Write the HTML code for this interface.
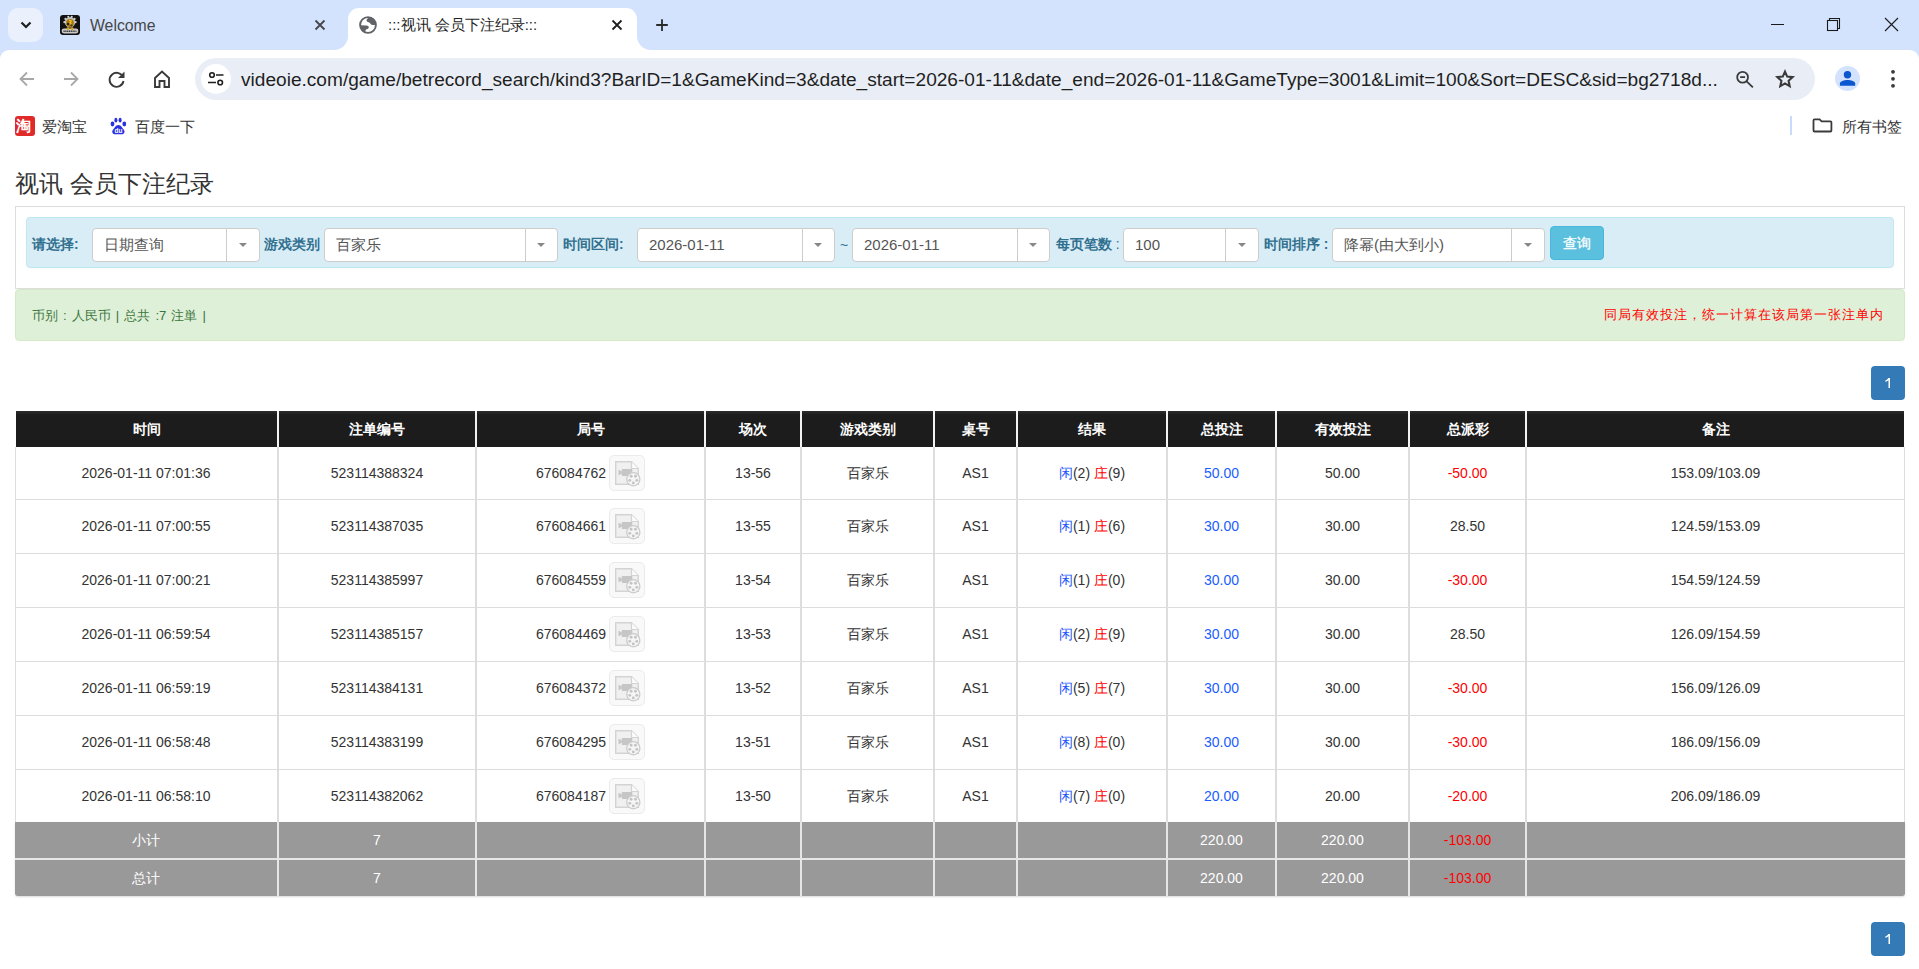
<!DOCTYPE html><html><head><meta charset="utf-8"><style>
*{box-sizing:border-box;margin:0;padding:0}
html,body{width:1919px;height:969px;overflow:hidden;background:#fff;font-family:"Liberation Sans", sans-serif;}
.a{position:absolute}
.tx{position:absolute;white-space:nowrap;line-height:1}
.th{position:absolute;top:411px;height:36px;background:linear-gradient(#2c2c2c,#1c1c1c 4px);color:#fff;font-weight:bold;font-size:13.75px;text-align:center;line-height:37px}
.td{position:absolute;text-align:center;color:#333;font-size:14px;white-space:nowrap}
.vb{position:absolute;width:2px}
.hb{position:absolute;height:1px;background:#dddddd}
.sel{position:absolute;top:228px;height:34px;background:#fff;border:1px solid #cccccc;border-radius:4px}
.sel .v{position:absolute;top:0;line-height:32px;font-size:15px;color:#555;white-space:nowrap}
.sel .d{position:absolute;top:0;bottom:0;width:1px;background:#cccccc}
.sel .c{position:absolute;top:14px;width:0;height:0;border-left:4px solid transparent;border-right:4px solid transparent;border-top:4px solid #888}
.lbl{position:absolute;top:237px;font-size:13.75px;font-weight:bold;color:#31708f;line-height:16px;white-space:nowrap}
</style></head><body>

<div class="a" style="left:0;top:0;width:1919px;height:62px;background:#d3e3fd"></div>
<div class="a" style="left:8px;top:8px;width:35px;height:34px;border-radius:10px;background:#eaf1fd"></div>
<svg class="a" style="left:17.5px;top:17px" width="16" height="16" viewBox="0 0 16 16"><path d="M3.5 5.5L8 10l4.5-4.5" fill="none" stroke="#1f1f1f" stroke-width="2.2"/></svg>
<div class="a" style="left:60px;top:15px;width:20px;height:20px;border-radius:3px;background:#111"></div>
<svg class="a" style="left:60px;top:15px" width="20" height="20" viewBox="0 0 20 20"><circle cx="10" cy="7.2" r="5.2" fill="#bdbdbd"/><circle cx="4.40" cy="7.20" r="1.1" fill="#d0d0d0"/><circle cx="5.47" cy="3.91" r="1.1" fill="#d0d0d0"/><circle cx="8.27" cy="1.87" r="1.1" fill="#d0d0d0"/><circle cx="11.73" cy="1.87" r="1.1" fill="#d0d0d0"/><circle cx="14.53" cy="3.91" r="1.1" fill="#d0d0d0"/><circle cx="15.60" cy="7.20" r="1.1" fill="#d0d0d0"/><circle cx="10" cy="8" r="3.9" fill="#a87a08"/><circle cx="8" cy="9" r="1.2" fill="#222"/><circle cx="11.5" cy="10.6" r="1" fill="#333"/><path d="M9.2 5.2l2 .9-1.1 1.6 1.3 1.2" fill="none" stroke="#f5c232" stroke-width="1.3"/><rect x="1.6" y="13.6" width="16.8" height="4.8" rx="2.4" fill="#c9c9c9"/><path d="M3.5 16.3h13" stroke="#333" stroke-width="1.5" stroke-dasharray="1.2 .6"/><circle cx="7.9" cy="13.6" r="1.4" fill="#d9a010"/><circle cx="12.1" cy="13.6" r="1.4" fill="#d9a010"/></svg>
<div class="tx" style="left:90px;top:18px;font-size:15.8px;color:#474747">Welcome</div>
<svg class="a" style="left:313px;top:18px" width="14" height="14" viewBox="0 0 14 14"><path d="M2.5 2.5l9 9M11.5 2.5l-9 9" stroke="#474747" stroke-width="1.8"/></svg>
<svg class="a" style="left:334px;top:8px" width="317" height="42" viewBox="0 0 317 42"><path d="M0 42A14 14 0 0 0 14 28V11A11 11 0 0 1 25 0H292A11 11 0 0 1 303 11V28A14 14 0 0 0 317 42Z" fill="#fff"/></svg>
<svg class="a" style="left:358px;top:15px" width="20" height="20" viewBox="0 0 20 20"><circle cx="10" cy="10" r="7.9" fill="none" stroke="#5f6368" stroke-width="1.9"/><path d="M11.8 2C10.8 3 9 3.6 8.6 5.1 8.3 6.4 9.3 7.2 10.7 7.3 11.7 7.4 12.1 8.3 12.8 9.3 13.5 10.3 15.2 10.2 17.9 9.7A8 8 0 0 0 11.8 2Z" fill="#5f6368"/><path d="M2 10.3L8.3 10.5C9.9 10.6 10.9 11.3 10.8 12.6 10.7 13.9 9.2 14.1 8.1 14.6 7.3 15 7.3 16.2 7.6 17.8A8 8 0 0 1 2 10.3Z" fill="#5f6368"/></svg>
<div class="tx" style="left:388px;top:17px;font-size:15px;color:#1f1f1f">:::视讯 会员下注纪录:::</div>
<svg class="a" style="left:610px;top:18px" width="14" height="14" viewBox="0 0 14 14"><path d="M2.5 2.5l9 9M11.5 2.5l-9 9" stroke="#1f1f1f" stroke-width="1.8"/></svg>
<svg class="a" style="left:654px;top:17px" width="16" height="16" viewBox="0 0 16 16"><path d="M8 2.3v11.6M2.2 8h11.6" stroke="#2a2a2a" stroke-width="1.8"/></svg>
<div class="a" style="left:1771px;top:24px;width:13px;height:1px;background:#1a1a1a"></div>
<svg class="a" style="left:1826px;top:17px" width="16" height="16" viewBox="0 0 16 16"><rect x="1.5" y="3.5" width="10" height="10" fill="none" stroke="#1a1a1a" stroke-width="1.1"/><path d="M3.5 3V1.5H13.5V11.5H12" fill="none" stroke="#1a1a1a" stroke-width="1.1"/></svg>
<svg class="a" style="left:1884px;top:17px" width="16" height="16" viewBox="0 0 16 16"><path d="M1 1l13 13M14 1L1 14" stroke="#1a1a1a" stroke-width="1.1"/></svg>
<div class="a" style="left:0;top:50px;width:1919px;height:96px;background:#fff;border-radius:9px 9px 0 0"></div>
<svg class="a" style="left:17px;top:69px" width="20" height="20" viewBox="0 0 20 20"><path d="M17 10H4M10 3.5L3.5 10 10 16.5" fill="none" stroke="#a8a8a8" stroke-width="1.8"/></svg>
<svg class="a" style="left:61px;top:69px" width="20" height="20" viewBox="0 0 20 20"><path d="M3 10h13M10 3.5l6.5 6.5L10 16.5" fill="none" stroke="#a8a8a8" stroke-width="1.8"/></svg>
<svg class="a" style="left:107px;top:69px" width="20" height="20" viewBox="0 0 20 20"><path d="M16.2 8.5A7 7 0 1 0 16.5 12" fill="none" stroke="#3a3a3a" stroke-width="1.9"/><path d="M17.5 2.5v6.5h-6.5z" fill="#3a3a3a"/></svg>
<svg class="a" style="left:152px;top:69px" width="20" height="20" viewBox="0 0 20 20"><path d="M3 18V9l7-6.5L17 9v9h-4.5v-6h-5v6z" fill="none" stroke="#3a3a3a" stroke-width="1.9" stroke-linejoin="miter"/></svg>
<div class="a" style="left:195px;top:58px;width:1620px;height:42px;border-radius:21px;background:#e9eef6"></div>
<div class="a" style="left:201px;top:64px;width:30px;height:30px;border-radius:15px;background:#fff"></div>
<svg class="a" style="left:206px;top:69px" width="20" height="20" viewBox="0 0 20 20"><circle cx="6" cy="6" r="2.3" fill="none" stroke="#1f1f1f" stroke-width="1.6"/><path d="M10 6h7.5M2 13.5h8" stroke="#1f1f1f" stroke-width="1.6"/><circle cx="14.2" cy="13.5" r="2.3" fill="none" stroke="#1f1f1f" stroke-width="1.6"/></svg>
<div class="tx" id="url" style="left:241px;top:70px;font-size:19.1px;color:#1f1f1f">videoie.com/game/betrecord_search/kind3?BarID=1&amp;GameKind=3&amp;date_start=2026-01-11&amp;date_end=2026-01-11&amp;GameType=3001&amp;Limit=100&amp;Sort=DESC&amp;sid=bg2718d...</div>
<svg class="a" style="left:1733px;top:67px" width="24" height="24" viewBox="0 0 24 24"><circle cx="9.6" cy="10.3" r="5.4" fill="none" stroke="#3a3a3a" stroke-width="1.8"/><path d="M7.1 10.2h5M13.6 14.3l6.3 6" stroke="#3a3a3a" stroke-width="1.8"/></svg>
<svg class="a" style="left:1773px;top:67px" width="24" height="24" viewBox="0 0 24 24"><path d="M12.00 4.60L14.21 9.56L19.61 10.13L15.58 13.76L16.70 19.07L12.00 16.36L7.30 19.07L8.42 13.76L4.39 10.13L9.79 9.56Z" fill="none" stroke="#3a3a3a" stroke-width="2.1" stroke-linejoin="miter"/></svg>
<div class="a" style="left:1835px;top:66px;width:25px;height:25px;border-radius:13px;background:#d3e3fd"></div>
<svg class="a" style="left:1835px;top:66px" width="25" height="25" viewBox="0 0 25 25"><circle cx="12.5" cy="8.8" r="3.7" fill="#0b57d0"/><path d="M4.9 19.7V17.6C4.9 15 9 13.9 12.5 13.9S20.2 15 20.2 17.6V19.7Z" fill="#0b57d0"/></svg>
<svg class="a" style="left:1886.5px;top:68px" width="12" height="22" viewBox="0 0 12 22"><circle cx="6" cy="3.8" r="1.9" fill="#3a3a3a"/><circle cx="6" cy="10.8" r="1.9" fill="#3a3a3a"/><circle cx="6" cy="17.8" r="1.9" fill="#3a3a3a"/></svg>
<div class="a" style="left:15px;top:116px;width:20px;height:20px;border-radius:3px;background:#e02a2a"></div>
<div class="tx" style="left:16px;top:118px;font-size:15px;color:#fff;font-weight:bold">淘</div>
<div class="tx" style="left:42px;top:119.5px;font-size:14.5px;color:#333">爱淘宝</div>
<svg class="a" style="left:108px;top:116px" width="20" height="20" viewBox="0 0 20 20"><g fill="#2932e1"><ellipse cx="7.9" cy="4.2" rx="1.5" ry="2.4"/><ellipse cx="12.1" cy="4.2" rx="1.5" ry="2.4"/><ellipse cx="4.5" cy="8" rx="1.9" ry="2.4"/><ellipse cx="16.3" cy="8" rx="1.9" ry="2.4"/><path d="M10.4 9C7.6 9 6.6 12 5.1 13.5 3.6 15 4.1 18.3 7.1 18.3H13.7C16.7 18.3 17.2 15 15.7 13.5 14.2 12 13.2 9 10.4 9Z"/></g><text x="10.4" y="17.2" font-size="6.5" font-weight="bold" fill="#fff" text-anchor="middle" font-family="Liberation Sans">du</text></svg>
<div class="tx" style="left:135px;top:119.5px;font-size:14.5px;color:#333">百度一下</div>
<div class="a" style="left:1790px;top:116px;width:2px;height:19px;background:#c7dbfa"></div>
<svg class="a" style="left:1811px;top:116px" width="23" height="20" viewBox="0 0 23 20"><path d="M2.5 4.3Q2.5 3.3 3.5 3.3H8.6L10.6 5.3H19.4Q20.4 5.3 20.4 6.3V14.5Q20.4 15.5 19.4 15.5H3.5Q2.5 15.5 2.5 14.5Z" fill="none" stroke="#3a3a3a" stroke-width="1.8"/></svg>
<div class="tx" style="left:1842px;top:120px;font-size:14.5px;color:#333">所有书签</div>
<div class="tx" style="left:15px;top:172px;font-size:24px;color:#333">视讯 会员下注纪录</div>
<div class="a" style="left:15px;top:206px;width:1890px;height:83px;border:1px solid #dddddd"></div>
<div class="a" style="left:26px;top:217px;width:1868px;height:51px;background:#d9edf7;border:1px solid #bce8f1;border-radius:4px"></div>
<div class="lbl" style="left:32px">请选择:</div>
<div class="lbl" style="left:264px">游戏类别</div>
<div class="lbl" style="left:563px">时间区间:</div>
<div class="tx" style="left:840px;top:238px;font-size:14px;color:#31708f">~</div>
<div class="lbl" style="left:1056px">每页笔数 <span style="font-weight:normal">:</span></div>
<div class="lbl" style="left:1264px">时间排序 :</div>
<div class="sel" style="left:92px;width:168px"><div class="v" style="left:11px">日期查询</div><div class="d" style="left:133px"></div><div class="c" style="left:146px"></div></div>
<div class="sel" style="left:324px;width:234px"><div class="v" style="left:11px">百家乐</div><div class="d" style="left:200px"></div><div class="c" style="left:212px"></div></div>
<div class="sel" style="left:637px;width:198px"><div class="v" style="left:11px">2026-01-11</div><div class="d" style="left:164px"></div><div class="c" style="left:176px"></div></div>
<div class="sel" style="left:852px;width:198px"><div class="v" style="left:11px">2026-01-11</div><div class="d" style="left:164px"></div><div class="c" style="left:176px"></div></div>
<div class="sel" style="left:1123px;width:136px"><div class="v" style="left:11px">100</div><div class="d" style="left:101px"></div><div class="c" style="left:114px"></div></div>
<div class="sel" style="left:1332px;width:213px"><div class="v" style="left:11px">降幂(由大到小)</div><div class="d" style="left:178px"></div><div class="c" style="left:191px"></div></div>
<div class="a" style="left:1550px;top:226px;width:54px;height:34px;background:#5bc0de;border:1px solid #46b8da;border-radius:4px;color:#fff;font-size:13.75px;-webkit-text-stroke:0.3px #fff;text-align:center;line-height:33px">查询</div>
<div class="a" style="left:15px;top:289px;width:1890px;height:52px;background:#dff0d8;border:1px solid #d6e9c6;border-radius:4px"></div>
<div class="tx" style="left:32px;top:308.5px;font-size:13.2px;word-spacing:1.4px;color:#3c763d">币别 : 人民币 | 总共 :7 注単 |</div>
<div class="tx" style="left:1604px;top:308px;font-size:13.2px;letter-spacing:1.02px;color:#ff0000">同局有效投注，统一计算在该局第一张注单内</div>
<div class="a" style="left:1871px;top:366px;width:34px;height:34px;background:#337ab7;border-radius:4px"><svg width="34" height="34" viewBox="0 0 34 34" style="display:block"><path d="M17.5 11.9H19V21.9H17.5V14.2Q16.1 15.2 14.2 15.8V14.7Q16.3 13.7 17.5 11.9Z" fill="#fff"/></svg></div>
<div class="a" style="left:1871px;top:922px;width:34px;height:34px;background:#337ab7;border-radius:4px"><svg width="34" height="34" viewBox="0 0 34 34" style="display:block"><path d="M17.5 11.9H19V21.9H17.5V14.2Q16.1 15.2 14.2 15.8V14.7Q16.3 13.7 17.5 11.9Z" fill="#fff"/></svg></div>
<div class="th" style="left:16px;width:261px">时间</div>
<div class="th" style="left:279px;width:196px">注单编号</div>
<div class="th" style="left:477px;width:227px">局号</div>
<div class="th" style="left:706px;width:94px">场次</div>
<div class="th" style="left:802px;width:131px">游戏类别</div>
<div class="th" style="left:935px;width:81px">桌号</div>
<div class="th" style="left:1018px;width:148px">结果</div>
<div class="th" style="left:1168px;width:107px">总投注</div>
<div class="th" style="left:1277px;width:131px">有效投注</div>
<div class="th" style="left:1410px;width:115px">总派彩</div>
<div class="th" style="left:1527px;width:377px">备注</div>
<div class="vb" style="left:277px;top:411px;height:36px;background:#f2f2f2"></div>
<div class="vb" style="left:475px;top:411px;height:36px;background:#f2f2f2"></div>
<div class="vb" style="left:704px;top:411px;height:36px;background:#f2f2f2"></div>
<div class="vb" style="left:800px;top:411px;height:36px;background:#f2f2f2"></div>
<div class="vb" style="left:933px;top:411px;height:36px;background:#f2f2f2"></div>
<div class="vb" style="left:1016px;top:411px;height:36px;background:#f2f2f2"></div>
<div class="vb" style="left:1166px;top:411px;height:36px;background:#f2f2f2"></div>
<div class="vb" style="left:1275px;top:411px;height:36px;background:#f2f2f2"></div>
<div class="vb" style="left:1408px;top:411px;height:36px;background:#f2f2f2"></div>
<div class="vb" style="left:1525px;top:411px;height:36px;background:#f2f2f2"></div>
<div class="a" style="left:15px;top:447px;width:1890px;height:375px;background:#fff;border-left:1px solid #dddddd;border-right:1px solid #dddddd"></div>
<div class="hb" style="left:15px;top:499px;width:1890px"></div>
<div class="hb" style="left:15px;top:553px;width:1890px"></div>
<div class="hb" style="left:15px;top:607px;width:1890px"></div>
<div class="hb" style="left:15px;top:661px;width:1890px"></div>
<div class="hb" style="left:15px;top:715px;width:1890px"></div>
<div class="hb" style="left:15px;top:769px;width:1890px"></div>
<div class="vb" style="left:277px;top:447px;height:375px;background:#dddddd"></div>
<div class="vb" style="left:475px;top:447px;height:375px;background:#dddddd"></div>
<div class="vb" style="left:704px;top:447px;height:375px;background:#dddddd"></div>
<div class="vb" style="left:800px;top:447px;height:375px;background:#dddddd"></div>
<div class="vb" style="left:933px;top:447px;height:375px;background:#dddddd"></div>
<div class="vb" style="left:1016px;top:447px;height:375px;background:#dddddd"></div>
<div class="vb" style="left:1166px;top:447px;height:375px;background:#dddddd"></div>
<div class="vb" style="left:1275px;top:447px;height:375px;background:#dddddd"></div>
<div class="vb" style="left:1408px;top:447px;height:375px;background:#dddddd"></div>
<div class="vb" style="left:1525px;top:447px;height:375px;background:#dddddd"></div>
<div class="td" style="left:15px;top:447px;width:262px;height:52px;line-height:52px;">2026-01-11 07:01:36</div>
<div class="td" style="left:279px;top:447px;width:196px;height:52px;line-height:52px;">523114388324</div>
<div class="td" style="left:477px;top:447px;width:227px;height:52px;line-height:52px;">676084762<span style="display:inline-block;vertical-align:top;margin-left:3px;margin-top:8px;width:36px;height:36px;border:1px solid #ebebeb;border-radius:5px;background:#f9f9f9;line-height:0;padding:5px 0 0 5px"><svg width="24" height="24" viewBox="0 0 24 24" style="display:block;overflow:visible"><path d="M0.7 0.7H16.5L23.3 7.5V23.3H0.7z" fill="#f0f0f0" stroke="#d3d3d3" stroke-width="1.4"/><path d="M16.5 0.7V7.5H23.3" fill="#fbfbfb" stroke="#d3d3d3" stroke-width="1.2"/><path d="M3.5 8.8L6.8 10.3V12.7L3.5 14.2z" fill="#c6c6c6"/><rect x="6.8" y="8" width="10.5" height="7" fill="#c6c6c6"/><circle cx="18.3" cy="18.2" r="6.6" fill="#f5f5f5" stroke="#cbcbcb" stroke-width="1.3"/><circle cx="16.13" cy="15.21" r="1.45" fill="#c4c4c4"/><circle cx="20.47" cy="15.21" r="1.45" fill="#c4c4c4"/><circle cx="21.82" cy="19.34" r="1.45" fill="#c4c4c4"/><circle cx="18.30" cy="21.90" r="1.45" fill="#c4c4c4"/><circle cx="14.78" cy="19.34" r="1.45" fill="#c4c4c4"/></svg></span></div>
<div class="td" style="left:706px;top:447px;width:94px;height:52px;line-height:52px;">13-56</div>
<div class="td" style="left:802px;top:447px;width:131px;height:52px;line-height:52px;">百家乐</div>
<div class="td" style="left:935px;top:447px;width:81px;height:52px;line-height:52px;">AS1</div>
<div class="td" style="left:1018px;top:447px;width:148px;height:52px;line-height:52px;"><span style="color:#1a53ff">闲</span>(2) <span style="color:#ff0000">庄</span>(9)</div>
<div class="td" style="left:1168px;top:447px;width:107px;height:52px;line-height:52px;color:#1a5cff">50.00</div>
<div class="td" style="left:1277px;top:447px;width:131px;height:52px;line-height:52px;">50.00</div>
<div class="td" style="left:1410px;top:447px;width:115px;height:52px;line-height:52px;color:#ff0000">-50.00</div>
<div class="td" style="left:1527px;top:447px;width:377px;height:52px;line-height:52px;">153.09/103.09</div>
<div class="td" style="left:15px;top:500px;width:262px;height:53px;line-height:53px;">2026-01-11 07:00:55</div>
<div class="td" style="left:279px;top:500px;width:196px;height:53px;line-height:53px;">523114387035</div>
<div class="td" style="left:477px;top:500px;width:227px;height:53px;line-height:53px;">676084661<span style="display:inline-block;vertical-align:top;margin-left:3px;margin-top:8px;width:36px;height:36px;border:1px solid #ebebeb;border-radius:5px;background:#f9f9f9;line-height:0;padding:5px 0 0 5px"><svg width="24" height="24" viewBox="0 0 24 24" style="display:block;overflow:visible"><path d="M0.7 0.7H16.5L23.3 7.5V23.3H0.7z" fill="#f0f0f0" stroke="#d3d3d3" stroke-width="1.4"/><path d="M16.5 0.7V7.5H23.3" fill="#fbfbfb" stroke="#d3d3d3" stroke-width="1.2"/><path d="M3.5 8.8L6.8 10.3V12.7L3.5 14.2z" fill="#c6c6c6"/><rect x="6.8" y="8" width="10.5" height="7" fill="#c6c6c6"/><circle cx="18.3" cy="18.2" r="6.6" fill="#f5f5f5" stroke="#cbcbcb" stroke-width="1.3"/><circle cx="16.13" cy="15.21" r="1.45" fill="#c4c4c4"/><circle cx="20.47" cy="15.21" r="1.45" fill="#c4c4c4"/><circle cx="21.82" cy="19.34" r="1.45" fill="#c4c4c4"/><circle cx="18.30" cy="21.90" r="1.45" fill="#c4c4c4"/><circle cx="14.78" cy="19.34" r="1.45" fill="#c4c4c4"/></svg></span></div>
<div class="td" style="left:706px;top:500px;width:94px;height:53px;line-height:53px;">13-55</div>
<div class="td" style="left:802px;top:500px;width:131px;height:53px;line-height:53px;">百家乐</div>
<div class="td" style="left:935px;top:500px;width:81px;height:53px;line-height:53px;">AS1</div>
<div class="td" style="left:1018px;top:500px;width:148px;height:53px;line-height:53px;"><span style="color:#1a53ff">闲</span>(1) <span style="color:#ff0000">庄</span>(6)</div>
<div class="td" style="left:1168px;top:500px;width:107px;height:53px;line-height:53px;color:#1a5cff">30.00</div>
<div class="td" style="left:1277px;top:500px;width:131px;height:53px;line-height:53px;">30.00</div>
<div class="td" style="left:1410px;top:500px;width:115px;height:53px;line-height:53px;">28.50</div>
<div class="td" style="left:1527px;top:500px;width:377px;height:53px;line-height:53px;">124.59/153.09</div>
<div class="td" style="left:15px;top:554px;width:262px;height:53px;line-height:53px;">2026-01-11 07:00:21</div>
<div class="td" style="left:279px;top:554px;width:196px;height:53px;line-height:53px;">523114385997</div>
<div class="td" style="left:477px;top:554px;width:227px;height:53px;line-height:53px;">676084559<span style="display:inline-block;vertical-align:top;margin-left:3px;margin-top:8px;width:36px;height:36px;border:1px solid #ebebeb;border-radius:5px;background:#f9f9f9;line-height:0;padding:5px 0 0 5px"><svg width="24" height="24" viewBox="0 0 24 24" style="display:block;overflow:visible"><path d="M0.7 0.7H16.5L23.3 7.5V23.3H0.7z" fill="#f0f0f0" stroke="#d3d3d3" stroke-width="1.4"/><path d="M16.5 0.7V7.5H23.3" fill="#fbfbfb" stroke="#d3d3d3" stroke-width="1.2"/><path d="M3.5 8.8L6.8 10.3V12.7L3.5 14.2z" fill="#c6c6c6"/><rect x="6.8" y="8" width="10.5" height="7" fill="#c6c6c6"/><circle cx="18.3" cy="18.2" r="6.6" fill="#f5f5f5" stroke="#cbcbcb" stroke-width="1.3"/><circle cx="16.13" cy="15.21" r="1.45" fill="#c4c4c4"/><circle cx="20.47" cy="15.21" r="1.45" fill="#c4c4c4"/><circle cx="21.82" cy="19.34" r="1.45" fill="#c4c4c4"/><circle cx="18.30" cy="21.90" r="1.45" fill="#c4c4c4"/><circle cx="14.78" cy="19.34" r="1.45" fill="#c4c4c4"/></svg></span></div>
<div class="td" style="left:706px;top:554px;width:94px;height:53px;line-height:53px;">13-54</div>
<div class="td" style="left:802px;top:554px;width:131px;height:53px;line-height:53px;">百家乐</div>
<div class="td" style="left:935px;top:554px;width:81px;height:53px;line-height:53px;">AS1</div>
<div class="td" style="left:1018px;top:554px;width:148px;height:53px;line-height:53px;"><span style="color:#1a53ff">闲</span>(1) <span style="color:#ff0000">庄</span>(0)</div>
<div class="td" style="left:1168px;top:554px;width:107px;height:53px;line-height:53px;color:#1a5cff">30.00</div>
<div class="td" style="left:1277px;top:554px;width:131px;height:53px;line-height:53px;">30.00</div>
<div class="td" style="left:1410px;top:554px;width:115px;height:53px;line-height:53px;color:#ff0000">-30.00</div>
<div class="td" style="left:1527px;top:554px;width:377px;height:53px;line-height:53px;">154.59/124.59</div>
<div class="td" style="left:15px;top:608px;width:262px;height:53px;line-height:53px;">2026-01-11 06:59:54</div>
<div class="td" style="left:279px;top:608px;width:196px;height:53px;line-height:53px;">523114385157</div>
<div class="td" style="left:477px;top:608px;width:227px;height:53px;line-height:53px;">676084469<span style="display:inline-block;vertical-align:top;margin-left:3px;margin-top:8px;width:36px;height:36px;border:1px solid #ebebeb;border-radius:5px;background:#f9f9f9;line-height:0;padding:5px 0 0 5px"><svg width="24" height="24" viewBox="0 0 24 24" style="display:block;overflow:visible"><path d="M0.7 0.7H16.5L23.3 7.5V23.3H0.7z" fill="#f0f0f0" stroke="#d3d3d3" stroke-width="1.4"/><path d="M16.5 0.7V7.5H23.3" fill="#fbfbfb" stroke="#d3d3d3" stroke-width="1.2"/><path d="M3.5 8.8L6.8 10.3V12.7L3.5 14.2z" fill="#c6c6c6"/><rect x="6.8" y="8" width="10.5" height="7" fill="#c6c6c6"/><circle cx="18.3" cy="18.2" r="6.6" fill="#f5f5f5" stroke="#cbcbcb" stroke-width="1.3"/><circle cx="16.13" cy="15.21" r="1.45" fill="#c4c4c4"/><circle cx="20.47" cy="15.21" r="1.45" fill="#c4c4c4"/><circle cx="21.82" cy="19.34" r="1.45" fill="#c4c4c4"/><circle cx="18.30" cy="21.90" r="1.45" fill="#c4c4c4"/><circle cx="14.78" cy="19.34" r="1.45" fill="#c4c4c4"/></svg></span></div>
<div class="td" style="left:706px;top:608px;width:94px;height:53px;line-height:53px;">13-53</div>
<div class="td" style="left:802px;top:608px;width:131px;height:53px;line-height:53px;">百家乐</div>
<div class="td" style="left:935px;top:608px;width:81px;height:53px;line-height:53px;">AS1</div>
<div class="td" style="left:1018px;top:608px;width:148px;height:53px;line-height:53px;"><span style="color:#1a53ff">闲</span>(2) <span style="color:#ff0000">庄</span>(9)</div>
<div class="td" style="left:1168px;top:608px;width:107px;height:53px;line-height:53px;color:#1a5cff">30.00</div>
<div class="td" style="left:1277px;top:608px;width:131px;height:53px;line-height:53px;">30.00</div>
<div class="td" style="left:1410px;top:608px;width:115px;height:53px;line-height:53px;">28.50</div>
<div class="td" style="left:1527px;top:608px;width:377px;height:53px;line-height:53px;">126.09/154.59</div>
<div class="td" style="left:15px;top:662px;width:262px;height:53px;line-height:53px;">2026-01-11 06:59:19</div>
<div class="td" style="left:279px;top:662px;width:196px;height:53px;line-height:53px;">523114384131</div>
<div class="td" style="left:477px;top:662px;width:227px;height:53px;line-height:53px;">676084372<span style="display:inline-block;vertical-align:top;margin-left:3px;margin-top:8px;width:36px;height:36px;border:1px solid #ebebeb;border-radius:5px;background:#f9f9f9;line-height:0;padding:5px 0 0 5px"><svg width="24" height="24" viewBox="0 0 24 24" style="display:block;overflow:visible"><path d="M0.7 0.7H16.5L23.3 7.5V23.3H0.7z" fill="#f0f0f0" stroke="#d3d3d3" stroke-width="1.4"/><path d="M16.5 0.7V7.5H23.3" fill="#fbfbfb" stroke="#d3d3d3" stroke-width="1.2"/><path d="M3.5 8.8L6.8 10.3V12.7L3.5 14.2z" fill="#c6c6c6"/><rect x="6.8" y="8" width="10.5" height="7" fill="#c6c6c6"/><circle cx="18.3" cy="18.2" r="6.6" fill="#f5f5f5" stroke="#cbcbcb" stroke-width="1.3"/><circle cx="16.13" cy="15.21" r="1.45" fill="#c4c4c4"/><circle cx="20.47" cy="15.21" r="1.45" fill="#c4c4c4"/><circle cx="21.82" cy="19.34" r="1.45" fill="#c4c4c4"/><circle cx="18.30" cy="21.90" r="1.45" fill="#c4c4c4"/><circle cx="14.78" cy="19.34" r="1.45" fill="#c4c4c4"/></svg></span></div>
<div class="td" style="left:706px;top:662px;width:94px;height:53px;line-height:53px;">13-52</div>
<div class="td" style="left:802px;top:662px;width:131px;height:53px;line-height:53px;">百家乐</div>
<div class="td" style="left:935px;top:662px;width:81px;height:53px;line-height:53px;">AS1</div>
<div class="td" style="left:1018px;top:662px;width:148px;height:53px;line-height:53px;"><span style="color:#1a53ff">闲</span>(5) <span style="color:#ff0000">庄</span>(7)</div>
<div class="td" style="left:1168px;top:662px;width:107px;height:53px;line-height:53px;color:#1a5cff">30.00</div>
<div class="td" style="left:1277px;top:662px;width:131px;height:53px;line-height:53px;">30.00</div>
<div class="td" style="left:1410px;top:662px;width:115px;height:53px;line-height:53px;color:#ff0000">-30.00</div>
<div class="td" style="left:1527px;top:662px;width:377px;height:53px;line-height:53px;">156.09/126.09</div>
<div class="td" style="left:15px;top:716px;width:262px;height:53px;line-height:53px;">2026-01-11 06:58:48</div>
<div class="td" style="left:279px;top:716px;width:196px;height:53px;line-height:53px;">523114383199</div>
<div class="td" style="left:477px;top:716px;width:227px;height:53px;line-height:53px;">676084295<span style="display:inline-block;vertical-align:top;margin-left:3px;margin-top:8px;width:36px;height:36px;border:1px solid #ebebeb;border-radius:5px;background:#f9f9f9;line-height:0;padding:5px 0 0 5px"><svg width="24" height="24" viewBox="0 0 24 24" style="display:block;overflow:visible"><path d="M0.7 0.7H16.5L23.3 7.5V23.3H0.7z" fill="#f0f0f0" stroke="#d3d3d3" stroke-width="1.4"/><path d="M16.5 0.7V7.5H23.3" fill="#fbfbfb" stroke="#d3d3d3" stroke-width="1.2"/><path d="M3.5 8.8L6.8 10.3V12.7L3.5 14.2z" fill="#c6c6c6"/><rect x="6.8" y="8" width="10.5" height="7" fill="#c6c6c6"/><circle cx="18.3" cy="18.2" r="6.6" fill="#f5f5f5" stroke="#cbcbcb" stroke-width="1.3"/><circle cx="16.13" cy="15.21" r="1.45" fill="#c4c4c4"/><circle cx="20.47" cy="15.21" r="1.45" fill="#c4c4c4"/><circle cx="21.82" cy="19.34" r="1.45" fill="#c4c4c4"/><circle cx="18.30" cy="21.90" r="1.45" fill="#c4c4c4"/><circle cx="14.78" cy="19.34" r="1.45" fill="#c4c4c4"/></svg></span></div>
<div class="td" style="left:706px;top:716px;width:94px;height:53px;line-height:53px;">13-51</div>
<div class="td" style="left:802px;top:716px;width:131px;height:53px;line-height:53px;">百家乐</div>
<div class="td" style="left:935px;top:716px;width:81px;height:53px;line-height:53px;">AS1</div>
<div class="td" style="left:1018px;top:716px;width:148px;height:53px;line-height:53px;"><span style="color:#1a53ff">闲</span>(8) <span style="color:#ff0000">庄</span>(0)</div>
<div class="td" style="left:1168px;top:716px;width:107px;height:53px;line-height:53px;color:#1a5cff">30.00</div>
<div class="td" style="left:1277px;top:716px;width:131px;height:53px;line-height:53px;">30.00</div>
<div class="td" style="left:1410px;top:716px;width:115px;height:53px;line-height:53px;color:#ff0000">-30.00</div>
<div class="td" style="left:1527px;top:716px;width:377px;height:53px;line-height:53px;">186.09/156.09</div>
<div class="td" style="left:15px;top:770px;width:262px;height:52px;line-height:52px;">2026-01-11 06:58:10</div>
<div class="td" style="left:279px;top:770px;width:196px;height:52px;line-height:52px;">523114382062</div>
<div class="td" style="left:477px;top:770px;width:227px;height:52px;line-height:52px;">676084187<span style="display:inline-block;vertical-align:top;margin-left:3px;margin-top:8px;width:36px;height:36px;border:1px solid #ebebeb;border-radius:5px;background:#f9f9f9;line-height:0;padding:5px 0 0 5px"><svg width="24" height="24" viewBox="0 0 24 24" style="display:block;overflow:visible"><path d="M0.7 0.7H16.5L23.3 7.5V23.3H0.7z" fill="#f0f0f0" stroke="#d3d3d3" stroke-width="1.4"/><path d="M16.5 0.7V7.5H23.3" fill="#fbfbfb" stroke="#d3d3d3" stroke-width="1.2"/><path d="M3.5 8.8L6.8 10.3V12.7L3.5 14.2z" fill="#c6c6c6"/><rect x="6.8" y="8" width="10.5" height="7" fill="#c6c6c6"/><circle cx="18.3" cy="18.2" r="6.6" fill="#f5f5f5" stroke="#cbcbcb" stroke-width="1.3"/><circle cx="16.13" cy="15.21" r="1.45" fill="#c4c4c4"/><circle cx="20.47" cy="15.21" r="1.45" fill="#c4c4c4"/><circle cx="21.82" cy="19.34" r="1.45" fill="#c4c4c4"/><circle cx="18.30" cy="21.90" r="1.45" fill="#c4c4c4"/><circle cx="14.78" cy="19.34" r="1.45" fill="#c4c4c4"/></svg></span></div>
<div class="td" style="left:706px;top:770px;width:94px;height:52px;line-height:52px;">13-50</div>
<div class="td" style="left:802px;top:770px;width:131px;height:52px;line-height:52px;">百家乐</div>
<div class="td" style="left:935px;top:770px;width:81px;height:52px;line-height:52px;">AS1</div>
<div class="td" style="left:1018px;top:770px;width:148px;height:52px;line-height:52px;"><span style="color:#1a53ff">闲</span>(7) <span style="color:#ff0000">庄</span>(0)</div>
<div class="td" style="left:1168px;top:770px;width:107px;height:52px;line-height:52px;color:#1a5cff">20.00</div>
<div class="td" style="left:1277px;top:770px;width:131px;height:52px;line-height:52px;">20.00</div>
<div class="td" style="left:1410px;top:770px;width:115px;height:52px;line-height:52px;color:#ff0000">-20.00</div>
<div class="td" style="left:1527px;top:770px;width:377px;height:52px;line-height:52px;">206.09/186.09</div>
<div class="a" style="left:15px;top:822px;width:1890px;height:74px;background:#999999;border-radius:0 0 3px 3px;box-shadow:0 1px 2px rgba(0,0,0,.15)"></div>
<div class="a" style="left:15px;top:858px;width:1890px;height:2px;background:#e6e6e6"></div>
<div class="vb" style="left:277px;top:822px;height:74px;background:#e6e6e6"></div>
<div class="vb" style="left:475px;top:822px;height:74px;background:#e6e6e6"></div>
<div class="vb" style="left:704px;top:822px;height:74px;background:#e6e6e6"></div>
<div class="vb" style="left:800px;top:822px;height:74px;background:#e6e6e6"></div>
<div class="vb" style="left:933px;top:822px;height:74px;background:#e6e6e6"></div>
<div class="vb" style="left:1016px;top:822px;height:74px;background:#e6e6e6"></div>
<div class="vb" style="left:1166px;top:822px;height:74px;background:#e6e6e6"></div>
<div class="vb" style="left:1275px;top:822px;height:74px;background:#e6e6e6"></div>
<div class="vb" style="left:1408px;top:822px;height:74px;background:#e6e6e6"></div>
<div class="vb" style="left:1525px;top:822px;height:74px;background:#e6e6e6"></div>
<div class="td" style="left:15px;top:822px;width:262px;height:36px;line-height:36px;color:#fff">小计</div>
<div class="td" style="left:279px;top:822px;width:196px;height:36px;line-height:36px;color:#fff">7</div>
<div class="td" style="left:1168px;top:822px;width:107px;height:36px;line-height:36px;color:#fff">220.00</div>
<div class="td" style="left:1277px;top:822px;width:131px;height:36px;line-height:36px;color:#fff">220.00</div>
<div class="td" style="left:1410px;top:822px;width:115px;height:36px;line-height:36px;color:#ff0000">-103.00</div>
<div class="td" style="left:15px;top:860px;width:262px;height:36px;line-height:36px;color:#fff">总计</div>
<div class="td" style="left:279px;top:860px;width:196px;height:36px;line-height:36px;color:#fff">7</div>
<div class="td" style="left:1168px;top:860px;width:107px;height:36px;line-height:36px;color:#fff">220.00</div>
<div class="td" style="left:1277px;top:860px;width:131px;height:36px;line-height:36px;color:#fff">220.00</div>
<div class="td" style="left:1410px;top:860px;width:115px;height:36px;line-height:36px;color:#ff0000">-103.00</div>
</body></html>
